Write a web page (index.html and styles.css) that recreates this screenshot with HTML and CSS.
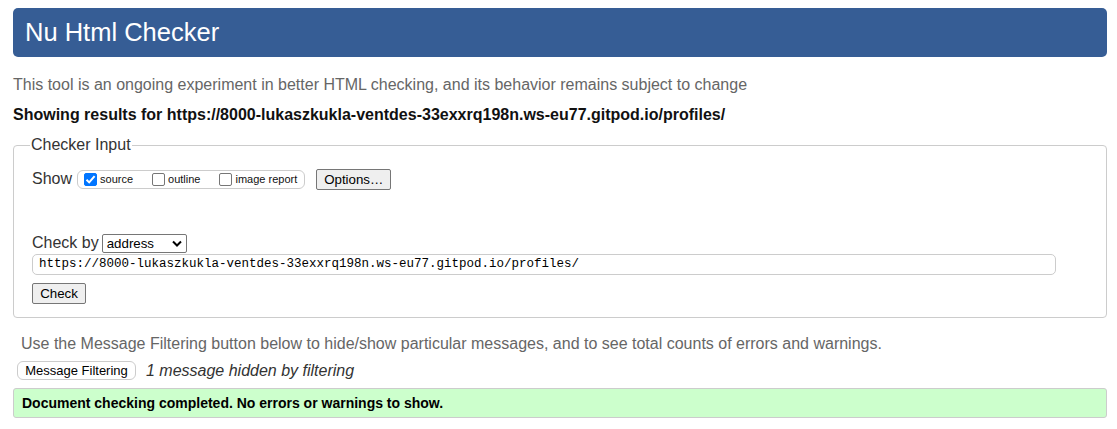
FILE: index.html
```html
<!DOCTYPE html>
<html>
<head>
<meta charset="utf-8">
<link rel="stylesheet" href="styles.css">
</head>
<body>
<header class="banner"><h1 class="title">Nu Html Checker</h1></header>
<p class="intro">This tool is an ongoing experiment in better HTML checking, and its behavior remains subject to change</p>
<p class="showing">Showing results for https://8000-lukaszkukla-ventdes-33exxrq198n.ws-eu77.gitpod.io/profiles/</p>
<fieldset class="checker">
  <legend class="legend">Checker Input</legend>
  <div class="show-row">
    <span class="label">Show</span>
    <fieldset class="opts">
      <label class="opt"><span class="cb checked"><svg width="13" height="13" viewBox="0 0 13 13"><path d="M2.5 6.8 L5.2 9.4 L10.6 3.2" fill="none" stroke="#fff" stroke-width="2"/></svg></span>source</label>
      <label class="opt"><span class="cb"></span>outline</label>
      <label class="opt"><span class="cb"></span>image report</label>
    </fieldset>
    <button class="btn options">Options…</button>
  </div>
  <div class="checkby-row">
    <span class="label">Check by</span>
    <span class="select">address<svg width="10" height="7" viewBox="0 0 10 7"><path d="M1 1.5 L5 5.5 L9 1.5" fill="none" stroke="#000" stroke-width="2"/></svg></span>
  </div>
  <div class="url">https://8000-lukaszkukla-ventdes-33exxrq198n.ws-eu77.gitpod.io/profiles/</div>
  <div><button class="btn check">Check</button></div>
</fieldset>
<p class="filter-note">Use the Message Filtering button below to hide/show particular messages, and to see total counts of errors and warnings.</p>
<div class="filter-row">
  <button class="btn pill">Message Filtering</button>
  <em class="hidden-note">1 message hidden by filtering</em>
</div>
<div class="success">Document checking completed. No errors or warnings to show.</div>
</body>
</html>
```
FILE: styles.css
```css
* { box-sizing: border-box; }
html, body { background: #fff; }
body {
  margin: 0;
  padding: 8px 10px 0 13px;
  font-family: "Liberation Sans", Arial, sans-serif;
  font-size: 16px;
  color: #000;
}
.banner {
  background: #365d95;
  border-radius: 5px;
  height: 49px;
  display: flex;
  align-items: center;
  padding-left: 12px;
}
.title {
  margin: 0;
  color: #fff;
  font-weight: normal;
  font-size: 25.5px;
  line-height: 1;
}
.intro {
  margin: 18px 0 0;
  color: #666;
  line-height: 19px;
}
.showing {
  margin: 11px 0 0;
  font-weight: bold;
  line-height: 19px;
  color: #111;
}
.checker {
  margin: 12px 0 0;
  border: 1px solid #ccc;
  border-radius: 4px;
  padding: 14px 19px 13px 18px;
  min-width: 0;
}
.legend {
  padding: 0 1px;
  margin-left: -2px;
  color: #333;
  line-height: 18px;
  font-size: 16px;
}
.show-row {
  display: flex;
  align-items: center;
  height: 22px;
}
.label { color: #333; margin-right: 3px; }
.opts {
  display: flex;
  align-items: center;
  margin: 0 11px 0 2px;
  padding: 0 7px 0 6px;
  border: 1px solid #ccc;
  border-radius: 6px;
  height: 19px;
}
.opt {
  display: flex;
  align-items: center;
  font-size: 11px;
  color: #111;
  margin-right: 19px;
}
.opt:last-child { margin-right: 0; }
.cb {
  width: 13px;
  height: 13px;
  border: 1px solid #767676;
  border-radius: 2px;
  margin-right: 3px;
  display: inline-flex;
  background: #fff;
}
.cb.checked { background: #0075ff; border-color: #0075ff; }
.cb svg { margin: -1px; }
.btn {
  font-family: "Liberation Sans", Arial, sans-serif;
  font-size: 13.3px;
  color: #000;
  background: #efefef;
  border: 1px solid #767676;
  border-radius: 2px;
  padding: 1px 6px;
  height: 21px;
  line-height: 17px;
}
.options { width: 75px; }
.checkby-row {
  display: flex;
  align-items: center;
  margin-top: 42px;
  height: 22px;
}
.checkby-row .label { margin-right: 3px; }
.select {
  display: inline-flex;
  align-items: center;
  justify-content: space-between;
  width: 85px;
  height: 19px;
  border: 1px solid #767676;
  border-radius: 2px;
  padding: 0 4px 0 4px;
  font-size: 13.3px;
  color: #000;
}
.url {
  margin-top: 0;
  height: 21px;
  border: 1px solid #ccc;
  border-radius: 5px;
  font-family: "Liberation Mono", monospace;
  font-size: 12.5px;
  line-height: 19px;
  padding-left: 6px;
  color: #000;
  width: 1024px;
}
.check { margin-top: 8px; width: 54px; height: 21px; padding: 1px 0; }
.filter-note {
  margin: 16px 0 0 8px;
  color: #666;
  line-height: 19px;
}
.filter-row {
  display: flex;
  align-items: center;
  margin: 8px 0 0 4px;
}
.pill {
  background: #fff;
  border: 1px solid #ccc;
  border-radius: 6px;
  height: 19px;
  line-height: 15px;
  padding: 0 6px;
  font-size: 13px;
  width: 119px;
}
.hidden-note {
  margin-left: 10px;
  color: #333;
  font-size: 16px;
}
.success {
  margin-top: 8px;
  background: #ccffcc;
  border: 1px solid #ccc;
  border-radius: 3px;
  height: 30px;
  padding-left: 8px;
  display: flex;
  align-items: center;
  font-weight: bold;
  font-size: 14px;
  color: #000;
}
```
